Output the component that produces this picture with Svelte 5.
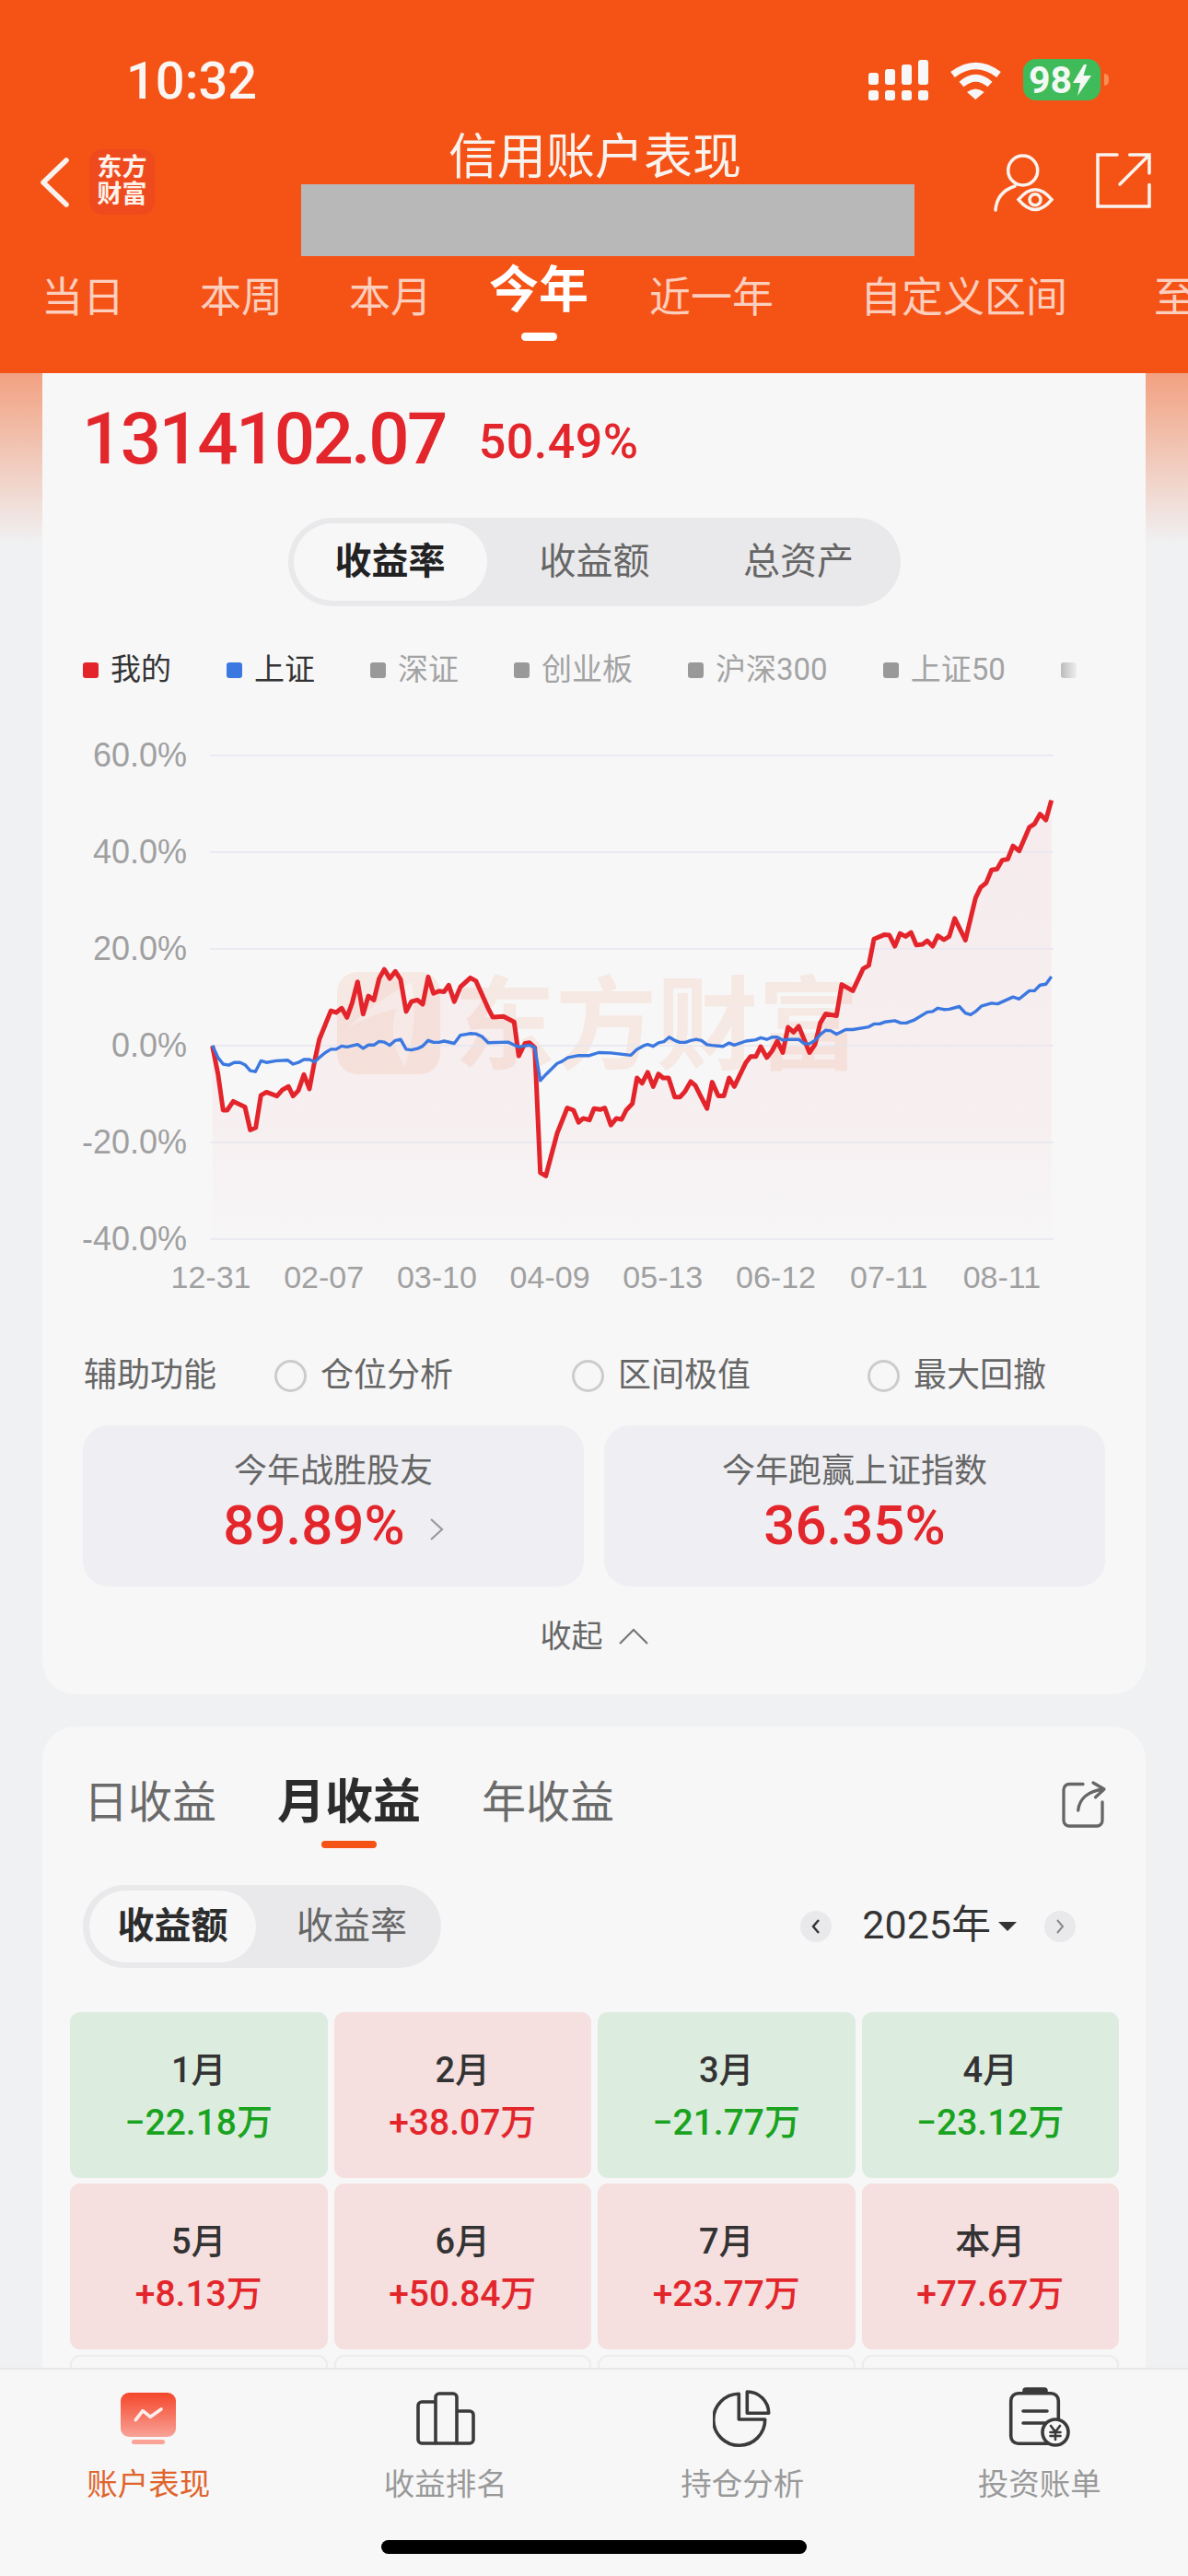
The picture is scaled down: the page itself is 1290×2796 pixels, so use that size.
<script>
  // traced from the screenshot: left half is x = 200 + X/3, right half is x = 700 + X/3, y = 780 + Y/2.8
  const redA = [[92,995],[110,1080],[127,1190],[140,1190],[160,1163],[198,1180],[215,1250],[233,1243],[250,1145],[268,1135],[302,1147],[320,1128],[340,1118],[355,1147],[372,1130],[390,1082],[408,1125],[425,1040],[440,975],[478,888],[495,893],[513,880],[530,908],[547,865],[565,800],[583,898],[600,843],[618,855],[635,790],[652,762],[670,790],[688,768],[705,793],[723,890],[740,860],[760,855],[777,868],[795,785],[812,835],[830,828],[847,830],[862,810],[880,860],[900,815],[932,788],[950,797],[990,880],[1005,907],[1040,905],[1075,922],[1090,1025],[1110,987],[1125,985],[1142,1000],[1160,1380],[1178,1390],[1215,1260],[1248,1183],[1268,1190],[1285,1227],[1300,1215],[1320,1220],[1335,1185],[1355,1188],[1370,1183],[1390,1235],[1408,1215],[1425,1218],[1440,1190],[1460,1170],[1475,1092],[1492,1108]];
  const redB = [[10,1075],[28,1118],[45,1080],[60,1092],[78,1092],[98,1150],[115,1150],[130,1135],[150,1103],[165,1115],[203,1185],[220,1105],[240,1147],[258,1147],[275,1092],[292,1118],[330,1045],[345,1027],[362,1027],[378,997],[398,1030],[415,1010],[432,980],[450,1015],[467,938],[485,953],[502,935],[537,1015],[555,990],[572,925],[590,897],[625,903],[642,808],[678,827],[712,760],[730,750],[747,670],[780,657],[797,658],[815,692],[832,653],[850,662],[868,650],[885,688],[905,686],[920,675],[938,692],[955,660],[975,672],[992,662],[1010,607],[1045,673],[1078,545],[1095,512],[1112,500],[1130,460],[1148,457],[1165,430],[1183,427],[1200,387],[1220,402],[1253,330],[1270,320],[1288,290],[1307,308],[1325,248]];
  const blueA = [[92,993],[110,1030],[127,1050],[145,1053],[163,1045],[182,1045],[198,1052],[215,1070],[232,1073],[250,1040],[268,1045],[300,1040],[337,1038],[355,1050],[372,1045],[390,1036],[408,1036],[425,1043],[440,1030],[460,1015],[478,1005],[495,1005],[513,995],[530,998],[565,990],[583,1002],[600,992],[618,992],[635,981],[652,983],[670,993],[688,978],[705,975],[723,1005],[740,1007],[760,1003],[777,995],[795,978],[812,984],[830,984],[847,980],[880,987],[900,962],[932,957],[950,958],[970,966],[990,985],[1055,983],[1075,992],[1090,998],[1125,992],[1142,1000],[1160,1100],[1180,1080],[1215,1048],[1230,1042],[1250,1030],[1285,1024],[1320,1024],[1350,1015],[1390,1016],[1455,1023],[1475,1005]];
  const blueB = [[0,993],[10,990],[28,996],[45,985],[62,982],[80,968],[98,978],[115,984],[133,984],[150,978],[168,975],[185,978],[203,991],[220,993],[255,996],[275,986],[292,992],[330,980],[362,976],[378,970],[398,975],[415,968],[432,968],[450,977],[467,975],[502,975],[520,988],[537,988],[555,978],[572,960],[590,947],[607,949],[625,959],[655,945],[678,945],[730,937],[747,928],[765,928],[782,922],[815,918],[835,925],[852,925],[880,915],[920,892],[938,890],[955,880],[975,884],[992,883],[1025,875],[1045,895],[1062,900],[1078,890],[1098,873],[1130,865],[1150,867],[1200,846],[1220,852],[1253,827],[1270,827],[1288,810],[1307,807],[1325,784]];

  const toPath = (a, b) => {
    const pts = [
      ...a.map(([x, y]) => [200 + x / 3, 780 + y / 2.8]),
      ...b.map(([x, y]) => [700 + x / 3, 780 + y / 2.8]),
    ];
    return "M" + pts.map(([x, y]) => x.toFixed(1) + " " + y.toFixed(1)).join("L");
  };
  const redLine = toPath(redA, redB);
  const blueLine = toPath(blueA, blueB);
  const redArea = redLine + "L1141.7 1345L230.7 1345Z";

  const yTicks = [
    { label: "60.0%", y: 820 },
    { label: "40.0%", y: 925 },
    { label: "20.0%", y: 1030 },
    { label: "0.0%", y: 1135 },
    { label: "-20.0%", y: 1240 },
    { label: "-40.0%", y: 1345 },
  ];
  const xTicks = ["12-31", "02-07", "03-10", "04-09", "05-13", "06-12", "07-11", "08-11"];

  const legend = [
    { name: "我的", cls: "red" },
    { name: "上证", cls: "blue" },
    { name: "深证", cls: "" },
    { name: "创业板", cls: "" },
    { name: "沪深300", cls: "" },
    { name: "上证50", cls: "" },
  ];

  const months = [
    { m: "1月", v: "−22.18万", up: false },
    { m: "2月", v: "+38.07万", up: true },
    { m: "3月", v: "−21.77万", up: false },
    { m: "4月", v: "−23.12万", up: false },
    { m: "5月", v: "+8.13万", up: true },
    { m: "6月", v: "+50.84万", up: true },
    { m: "7月", v: "+23.77万", up: true },
    { m: "本月", v: "+77.67万", up: true },
  ];
</script>

<div class="page">
  <header class="top">
    <div class="status">
      <span class="time">10:32</span>
      <div class="status-right">
        <svg width="65" height="44" viewBox="0 0 65 44" fill="#f7f7f7">
          <rect x="0" y="14" width="11" height="13" rx="3" />
          <rect x="18" y="10" width="11" height="17" rx="3" />
          <rect x="36" y="5" width="11" height="22" rx="3" />
          <rect x="54" y="0" width="11" height="27" rx="3" />
          <rect x="0" y="33" width="11" height="11" rx="3" />
          <rect x="18" y="33" width="11" height="11" rx="3" />
          <rect x="36" y="33" width="11" height="11" rx="3" />
          <rect x="54" y="33" width="11" height="11" rx="3" />
        </svg>
        <svg width="57" height="42" viewBox="0 0 57 42" fill="none" stroke="#f7f7f7" stroke-width="7.5">
          <path d="M3.5 15Q28.5 -4 53.5 15" />
          <path d="M13 25.5Q28.5 12 44 25.5" />
          <path d="M19 34Q28.3 27 37.7 34L28.3 42Z" fill="#f7f7f7" stroke="none" />
        </svg>
        <div class="battery">
          <div class="battery-body">
            <span>98</span>
            <svg width="22" height="34" viewBox="0 0 22 34" fill="#f2f8f3">
              <path d="M13 0L1 20H9L6 34L21 12H12.5L16 0Z" />
            </svg>
          </div>
          <i class="battery-nub"></i>
        </div>
      </div>
    </div>

    <div class="nav">
      <div class="nav-left">
        <svg width="34" height="60" viewBox="0 0 34 60" fill="none" stroke="#f9f3ef" stroke-width="5.5" stroke-linecap="round" stroke-linejoin="round">
          <path d="M29 6L4 30L29 54" />
        </svg>
        <div class="logo">东方<br />财富</div>
      </div>
      <div class="nav-mid">
        <div class="title">信用账户表现</div>
        <div class="masked"></div>
      </div>
      <div class="nav-right">
        <svg width="70" height="70" viewBox="0 0 70 70" fill="none" stroke="#f9f3ef" stroke-width="3.5" stroke-linecap="round">
          <circle cx="34.7" cy="21" r="16" />
          <path d="M5 64C6 51 14 42 26 38" />
          <path d="M30 52.7Q48 31 66 52.7Q48 74.5 30 52.7Z" />
          <circle cx="48" cy="52.7" r="6" />
        </svg>
        <svg width="64" height="64" viewBox="0 0 64 64" fill="none" stroke="#f9f3ef" stroke-width="3.5" stroke-linecap="round">
          <path d="M25 4H4V60H60V36.5" />
          <path d="M28 36L60 4M38.7 4H60V24" />
        </svg>
      </div>
    </div>

    <div class="ranges">
      <span>当日</span>
      <span>本周</span>
      <span>本月</span>
      <span class="on">今年<i></i></span>
      <span>近一年</span>
      <span>自定义区间</span>
      <span>至今</span>
    </div>
  </header>

  <main class="scroll">
    <section class="card first">
      <div class="total">
        <span class="amount">1314102.07</span>
        <span class="rate">50.49%</span>
      </div>

      <div class="seg">
        <span class="on">收益率</span>
        <span>收益额</span>
        <span>总资产</span>
      </div>

      <div class="legend">
        {#each legend as item}
          <div class="legend-item {item.cls}"><i></i>{item.name}</div>
        {/each}
        <div class="legend-item fade"><i></i></div>
      </div>

      <svg class="chart" width="1198" height="620" viewBox="46 790 1198 620">
        <defs>
          <linearGradient id="areaFill" gradientUnits="userSpaceOnUse" x1="0" y1="868" x2="0" y2="1345">
            <stop offset="0" stop-color="#e3242b" stop-opacity="0.055" />
            <stop offset="0.72" stop-color="#e3242b" stop-opacity="0.04" />
            <stop offset="1" stop-color="#e3242b" stop-opacity="0.005" />
          </linearGradient>
        </defs>
        <rect x="366" y="1055" width="112" height="111" rx="22" fill="#f6e8e2" />
        <path d="M377 1116Q410 1085 447 1066Q455 1110 440 1158Q420 1130 430 1095Q405 1100 377 1116Z" fill="#f7f2ef" />
        <text class="mark" x="493" y="1152">东方财富</text>
        <path d={redArea} fill="url(#areaFill)" />
        {#each yTicks as t}
          <line x1="228" x2="1144" y1={t.y} y2={t.y} stroke="#e6e6ee" stroke-width="1.5" />
          <text class="axis" x="203" y={t.y + 12} text-anchor="end">{t.label}</text>
        {/each}
        {#each xTicks as t, i}
          <text class="axis small" x={229 + i * 122.7} y="1398" text-anchor="middle">{t}</text>
        {/each}
        <path d={redLine} fill="none" stroke="#e3242b" stroke-width="5" stroke-linejoin="round" />
        <path d={blueLine} fill="none" stroke="#3b78e0" stroke-width="3.4" stroke-linejoin="round" />
      </svg>

      <div class="aux">
        <span>辅助功能</span>
        <label><i></i>仓位分析</label>
        <label><i></i>区间极值</label>
        <label><i></i>最大回撤</label>
      </div>

      <div class="stats">
        <div class="stat">
          <div class="stat-title">今年战胜股友</div>
          <div class="stat-value">
            89.89%
            <svg width="16" height="24" viewBox="0 0 16 24" fill="none" stroke="#999" stroke-width="2.2">
              <path d="M2 1L14 12L2 23" />
            </svg>
          </div>
        </div>
        <div class="stat">
          <div class="stat-title">今年跑赢上证指数</div>
          <div class="stat-value">36.35%</div>
        </div>
      </div>

      <div class="collapse">
        收起
        <svg width="32" height="18" viewBox="0 0 32 18" fill="none" stroke="#777" stroke-width="2.2">
          <path d="M1 17L16 2L31 17" />
        </svg>
      </div>
    </section>

    <section class="card second">
      <div class="period">
        <div class="period-tab">日收益</div>
        <div class="period-tab on">月收益<i></i></div>
        <div class="period-tab">年收益</div>
        <svg class="period-share" width="52" height="53" viewBox="0 0 52 53" fill="none" stroke="#666" stroke-width="3.3" stroke-linecap="round" stroke-linejoin="round">
          <path d="M26 4.5H11a6 6 0 0 0 -6 6V44a6 6 0 0 0 6 6H41a6 6 0 0 0 6 -6V24" />
          <path d="M20.7 33C22 20 32 12 48 10M37 3L49 10L39.5 18.7" />
        </svg>
      </div>

      <div class="filter">
        <div class="toggle">
          <span class="on">收益额</span>
          <span class="off">收益率</span>
        </div>
        <div class="year">
          <span class="year-btn">
            <svg width="10" height="16" viewBox="0 0 10 16" fill="none" stroke="#333" stroke-width="2.4"><path d="M8 1L2 8L8 15" /></svg>
          </span>
          <span class="year-text">2025年</span>
          <i class="caret"></i>
          <span class="year-btn next">
            <svg width="10" height="16" viewBox="0 0 10 16" fill="none" stroke="#888" stroke-width="2"><path d="M2 1L8 8L2 15" /></svg>
          </span>
        </div>
      </div>

      <div class="months">
        {#each months as row}
          <div class="month" class:up={row.up}>
            <div class="month-name">{row.m}</div>
            <div class="month-value">{row.v}</div>
          </div>
        {/each}
        <div class="month blank"></div>
        <div class="month blank"></div>
        <div class="month blank"></div>
        <div class="month blank"></div>
      </div>
    </section>
  </main>

  <nav class="tabbar">
    <div class="tabs">
      <div class="tab on">
        <div class="tab-icon">
          <svg width="60" height="56" viewBox="0 0 60 56">
            <defs>
              <linearGradient id="tabRed" x1="0" y1="0" x2="0" y2="1">
                <stop offset="0" stop-color="#f4462a" />
                <stop offset="1" stop-color="#f8a297" />
              </linearGradient>
            </defs>
            <rect x="0" y="0" width="60" height="48" rx="9" fill="url(#tabRed)" />
            <rect x="12" y="51" width="36" height="5" rx="2.5" fill="#f9a497" />
            <path d="M16.3 29.7L24 19.7L32.3 26.3L44 18" fill="none" stroke="#fdeeea" stroke-width="3.6" stroke-linecap="round" stroke-linejoin="round" />
          </svg>
        </div>
        <span>账户表现</span>
      </div>
      <div class="tab">
        <div class="tab-icon">
          <svg width="64" height="58" viewBox="0 0 64 58" fill="none" stroke="#3a3a3a" stroke-width="3.6" stroke-linejoin="round">
            <path d="M21 56H6a4 4 0 0 1 -4 -4V15a4 4 0 0 1 4 -4H21" />
            <path d="M21 56V6a4 4 0 0 1 4 -4H40a4 4 0 0 1 4 4V56Z" />
            <path d="M44 21H58a4 4 0 0 1 4 4V52a4 4 0 0 1 -4 4H44" />
          </svg>
        </div>
        <span>收益排名</span>
      </div>
      <div class="tab">
        <div class="tab-icon">
          <svg width="64" height="64" viewBox="0 0 64 64" fill="none" stroke="#3a3a3a" stroke-width="3.6" stroke-linejoin="round">
            <path d="M28.3 5.3V33H56.7A28 28 0 1 1 28.3 5.3Z" />
            <path d="M37.3 3V26.3H60.7A23.5 23.5 0 0 0 37.3 3Z" />
          </svg>
        </div>
        <span>持仓分析</span>
      </div>
      <div class="tab">
        <div class="tab-icon">
          <svg width="70" height="68" viewBox="0 0 70 68" fill="none" stroke="#3a3a3a" stroke-width="3.6" stroke-linecap="round">
            <rect x="3.7" y="6.7" width="51.6" height="54.6" rx="8" />
            <path d="M18 6V4a2 2 0 0 1 2 -2H40a2 2 0 0 1 2 2V6Z" fill="#3a3a3a" />
            <path d="M17 26H43M17 39H41" />
            <circle cx="52" cy="49" r="14" fill="#f7f7f8" />
            <path d="M47 42L52 48.5L57 42M52 48.5V57M46.5 49H57.5M46.5 53H57.5" stroke-width="2.6" />
          </svg>
        </div>
        <span>投资账单</span>
      </div>
    </div>
    <div class="home"></div>
  </nav>
</div>

<style>
  :global(body) {
    margin: 0;
    background: #f0f1f3;
  }
  .page {
    width: 1290px;
    height: 2796px;
    display: flex;
    flex-direction: column;
    overflow: hidden;
    background: #f0f1f3;
    font-family: Roboto, "Noto Sans CJK SC", sans-serif;
    color: #333;
  }
  i {
    display: block;
    font-style: normal;
  }

  .top {
    height: 405px;
    flex: none;
    background: #f55316;
    color: #fff;
  }
  .status {
    height: 140px;
    box-sizing: border-box;
    padding: 60px 86px 0 137px;
    display: flex;
    justify-content: space-between;
  }
  .time {
    font-size: 56px;
    line-height: 56px;
    font-weight: 500;
    color: #f9f6f3;
  }
  .status-right {
    display: flex;
    align-items: center;
    gap: 23px;
    height: 45px;
    margin-top: 4px;
  }
  .battery {
    display: flex;
    align-items: center;
    gap: 4px;
  }
  .battery-body {
    width: 84px;
    height: 45px;
    box-sizing: border-box;
    padding-left: 6px;
    border-radius: 14px;
    background: #3fbb5a;
    display: flex;
    align-items: center;
    font-size: 41px;
    font-weight: 700;
    color: #f2f8f3;
  }
  .battery-nub {
    width: 5px;
    height: 13px;
    border-radius: 0 5px 5px 0;
    background: #f88f55;
  }

  .nav {
    height: 138px;
    display: grid;
    grid-template-columns: 327px 666px 1fr;
  }
  .nav-left {
    display: flex;
    align-items: center;
    gap: 20px;
    height: 71px;
    padding: 22px 0 0 43px;
  }
  .logo {
    width: 71px;
    height: 71px;
    flex: none;
    border-radius: 14px;
    background: #ef4a1e;
    font-size: 27px;
    line-height: 29px;
    font-weight: 700;
    text-align: center;
    padding-top: 6px;
    box-sizing: border-box;
    color: #fdf3ea;
  }
  .title {
    font-size: 53px;
    line-height: 56px;
    padding: 3px 28px 0 0;
    height: 53px;
    text-align: center;
    color: #f9f3ef;
  }
  .masked {
    height: 78px;
    margin-top: 4px;
    background: #b8b8b8;
  }
  .nav-right {
    display: flex;
    gap: 42px;
    padding: 24px 0 0 83px;
    align-items: flex-start;
  }

  .ranges {
    display: flex;
    align-items: flex-start;
    padding-left: 45px;
    height: 127px;
    overflow: hidden;
    font-size: 45px;
    line-height: 56px;
    color: rgba(255, 255, 255, 0.72);
    white-space: nowrap;
  }
  .ranges span {
    flex: none;
    margin-top: 18px;
  }
  .ranges span:nth-child(2) { margin-left: 82px; }
  .ranges span:nth-child(3) { margin-left: 72px; }
  .ranges span:nth-child(4) { margin-left: 62px; }
  .ranges span:nth-child(5) { margin-left: 66px; }
  .ranges span:nth-child(6) { margin-left: 94px; }
  .ranges span:nth-child(7) { margin-left: 94px; }
  .ranges .on {
    margin-top: 8px;
    font-size: 54px;
    line-height: 60px;
    font-weight: 700;
    color: #fff;
    display: flex;
    flex-direction: column;
    align-items: center;
  }
  .ranges .on i {
    width: 39px;
    height: 9px;
    margin-top: 15px;
    border-radius: 5px;
    background: #fff;
  }

  .scroll {
    flex: 1;
    min-height: 0;
    overflow: hidden;
    padding: 0 46px;
    background: linear-gradient(#f2a181, #f0f1f3 185px);
  }
  .card {
    background: #f7f7f8;
    border-radius: 36px;
  }
  .first {
    border-radius: 0 0 36px 36px;
    padding-bottom: 43px;
  }

  .total {
    display: flex;
    align-items: center;
    gap: 36px;
    padding: 34px 0 0 43px;
    color: #e3262b;
    font-weight: 500;
  }
  .amount {
    font-size: 78px;
    line-height: 76px;
    letter-spacing: -2.6px;
  }
  .rate {
    margin-top: 5px;
    font-size: 52px;
    line-height: 56px;
    letter-spacing: 0.5px;
  }

  .seg {
    width: 665px;
    height: 96px;
    box-sizing: border-box;
    margin: 47px auto 0;
    padding: 6px;
    border-radius: 48px;
    background: #e9e9eb;
    display: grid;
    grid-template-columns: 210px 234px 209px;
    font-size: 40px;
    color: #666;
    text-align: center;
    line-height: 84px;
  }
  .seg .on {
    background: #f7f7f8;
    border-radius: 42px;
    color: #222;
    font-weight: 700;
  }

  .legend {
    display: flex;
    gap: 60px;
    height: 34px;
    margin-top: 52px;
    padding-left: 44px;
    font-size: 33px;
    line-height: 34px;
    color: #a3a3a3;
  }
  .legend-item {
    display: flex;
    align-items: center;
    gap: 13px;
    white-space: nowrap;
  }
  .legend-item i {
    width: 17px;
    height: 17px;
    border-radius: 3px;
    background: #999;
  }
  .legend-item.red,
  .legend-item.blue {
    color: #333;
  }
  .legend-item.red i {
    background: #e3242b;
  }
  .legend-item.blue i {
    background: #3b78e0;
  }
  .legend-item.fade i {
    background: linear-gradient(90deg, #bbb, #eee);
  }

  .chart {
    display: block;
    margin-top: 46px;
  }
  .axis {
    font-family: "Liberation Sans", sans-serif;
    font-size: 36px;
    fill: #a0a0a0;
  }
  .axis.small {
    font-size: 34px;
  }
  .mark {
    font-family: "Noto Sans CJK SC", sans-serif;
    font-size: 110px;
    font-weight: 700;
    fill: #f6e8e2;
  }

  .aux {
    display: grid;
    grid-template-columns: 207px 323px 321px auto;
    align-items: center;
    height: 44px;
    margin-top: 61px;
    padding-left: 45px;
    font-size: 36px;
    line-height: 40px;
    color: #666;
  }
  .aux label {
    display: flex;
    align-items: center;
    gap: 15px;
  }
  .aux i {
    width: 35px;
    height: 35px;
    box-sizing: border-box;
    border: 3px solid #ccc;
    border-radius: 50%;
  }

  .stats {
    display: grid;
    grid-template-columns: 1fr 1fr;
    gap: 22px;
    margin-top: 32px;
    padding: 0 44px;
  }
  .stat {
    height: 175px;
    box-sizing: border-box;
    padding-top: 30px;
    border-radius: 28px;
    background: #efeff3;
    text-align: center;
  }
  .stat-title {
    font-size: 36px;
    line-height: 40px;
    color: #666;
  }
  .stat-value {
    display: flex;
    justify-content: center;
    align-items: center;
    gap: 26px;
    margin-top: 11px;
    font-size: 60px;
    line-height: 56px;
    font-weight: 500;
    color: #e3262b;
  }
  .stat-value svg {
    margin-top: 8px;
  }

  .collapse {
    display: flex;
    justify-content: center;
    align-items: center;
    gap: 17px;
    height: 40px;
    margin-top: 34px;
    font-size: 34px;
    line-height: 40px;
    color: #666;
  }

  .second {
    margin-top: 35px;
    padding-bottom: 40px;
  }
  .period {
    display: flex;
    align-items: flex-start;
    gap: 66px;
    padding: 53px 42px 0 45px;
  }
  .period-tab {
    font-size: 48px;
    line-height: 60px;
    color: #6a6a6a;
  }
  .period-tab.on {
    font-size: 52px;
    font-weight: 700;
    color: #2c2c2c;
    display: flex;
    flex-direction: column;
    align-items: center;
  }
  .period-tab.on i {
    width: 60px;
    height: 8px;
    margin-top: 11px;
    border-radius: 4px;
    background: #f55316;
  }
  .period-share {
    margin: 5px 0 0 auto;
  }

  .filter {
    display: flex;
    justify-content: space-between;
    align-items: center;
    margin-top: 40px;
    padding: 0 76px 0 44px;
  }
  .toggle {
    width: 389px;
    height: 90px;
    box-sizing: border-box;
    padding: 6px 7px;
    border-radius: 45px;
    background: #e9e9eb;
    display: grid;
    grid-template-columns: 181px 1fr;
    font-size: 40px;
    line-height: 78px;
    text-align: center;
    color: #666;
  }
  .toggle .on {
    background: #f7f7f8;
    border-radius: 39px;
    font-weight: 700;
    color: #2c2c2c;
  }
  .toggle .off {
    padding-left: 14px;
  }
  .year {
    display: flex;
    align-items: center;
  }
  .year-btn {
    width: 34px;
    height: 34px;
    border-radius: 50%;
    background: #e9e9eb;
    display: flex;
    align-items: center;
    justify-content: center;
  }
  .year-text {
    margin: -4px 0 0 33px;
    font-size: 43px;
    line-height: 50px;
    color: #333;
  }
  .caret {
    width: 0;
    height: 0;
    margin-left: 8px;
    border-top: 10px solid #333;
    border-left: 10px solid transparent;
    border-right: 10px solid transparent;
  }
  .year-btn.next {
    margin-left: 30px;
  }

  .months {
    display: grid;
    grid-template-columns: repeat(4, 1fr);
    gap: 6px 7px;
    margin: 48px 29px 0 30px;
  }
  .month {
    height: 180px;
    box-sizing: border-box;
    padding-top: 38px;
    border-radius: 11px;
    background: #dcecdf;
    text-align: center;
    color: #19a31f;
  }
  .month.up {
    background: #f5dfdf;
    color: #e3262b;
  }
  .month.blank {
    background: #f7f7f8;
    border: 2px solid #ececee;
  }
  .month-name {
    font-size: 38px;
    line-height: 50px;
    font-weight: 500;
    color: #333;
  }
  .month-value {
    margin-top: 9px;
    font-size: 39px;
    line-height: 46px;
    font-weight: 500;
  }

  .tabbar {
    flex: none;
    height: 226px;
    box-sizing: border-box;
    border-top: 2px solid #e8e8e8;
    padding-top: 20px;
    background: #f7f7f8;
  }
  .tabs {
    display: grid;
    grid-template-columns: repeat(4, 1fr);
  }
  .tab {
    display: flex;
    flex-direction: column;
    align-items: center;
    font-size: 33.5px;
    line-height: 40px;
    color: #999;
  }
  .tab.on {
    color: #e0642c;
  }
  .tab-icon {
    height: 66px;
    margin-bottom: 19px;
    display: flex;
    align-items: center;
  }
  .home {
    width: 462px;
    height: 15px;
    margin: 40px auto 0;
    border-radius: 8px;
    background: #000;
  }
</style>
